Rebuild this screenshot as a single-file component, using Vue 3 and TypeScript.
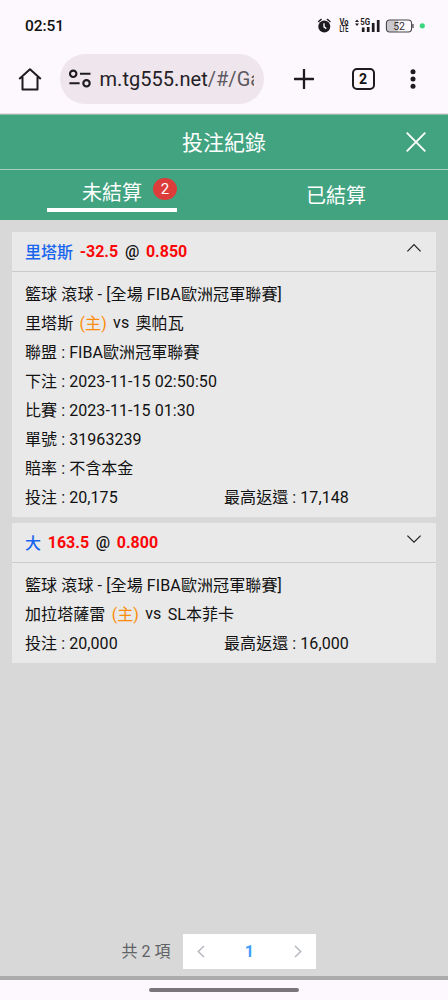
<script setup lang="ts">
interface Bet {
  pick: string
  line: string
  odds: string
  open: boolean
  home: string
  away: string
  details: { label: string; value: string }[]
  stake: string
  payout: string
}

const bets: Bet[] = [
  {
    pick: '里塔斯',
    line: '-32.5',
    odds: '0.850',
    open: true,
    home: '里塔斯',
    away: '奧帕瓦',
    details: [
      { label: '聯盟', value: 'FIBA歐洲冠軍聯賽' },
      { label: '下注', value: '2023-11-15 02:50:50' },
      { label: '比賽', value: '2023-11-15 01:30' },
      { label: '單號', value: '31963239' },
      { label: '賠率', value: '不含本金' },
    ],
    stake: '20,175',
    payout: '17,148',
  },
  {
    pick: '大',
    line: '163.5',
    odds: '0.800',
    open: false,
    home: '加拉塔薩雷',
    away: 'SL本菲卡',
    details: [],
    stake: '20,000',
    payout: '16,000',
  },
]
</script>

<template>
  <div class="screen">
    <div class="status">
      <span class="clock">02:51</span>
      <svg class="status-icons" width="118" height="20" viewBox="0 0 118 20">
        <g fill="none" stroke="#1d1b20" stroke-width="1.4" stroke-linecap="round">
          <path d="M2.6 5.5 5.2 3.4M14 5.5 11.4 3.4" />
        </g>
        <circle cx="8.3" cy="10.6" r="6" fill="#1d1b20" />
        <path d="M8 7.2v3.7l2.3 1.7" fill="none" stroke="#fdf8fd" stroke-width="1.4" />
        <text x="23.4" y="9.1" class="tiny" textLength="9" lengthAdjust="spacingAndGlyphs">Vo</text>
        <text x="23.4" y="16.3" class="tiny" textLength="9" lengthAdjust="spacingAndGlyphs">LTE</text>
        <path d="M39 6 41 3.6 43 6zM39 7.6 41 10 43 7.6z" fill="#1d1b20" />
        <text x="44.2" y="9.3" class="tiny" textLength="9.8" lengthAdjust="spacingAndGlyphs">5G</text>
        <path d="M47.2 16v-4.6M52.2 16v-5M57.2 16V7M62.2 16V4" stroke="#1d1b20" stroke-width="2.7" />
        <path d="M73.6 4.2H82v11.6h-8.4a3.2 3.2 0 0 1-3.2-3.2V7.4a3.2 3.2 0 0 1 3.2-3.2z" fill="#cbc8cc" />
        <rect x="70.4" y="4" width="25.2" height="12" rx="3.4" fill="none" stroke="#49464b" stroke-width="1.1" />
        <path d="M97 8v4" stroke="#49464b" stroke-width="1.3" />
        <text x="77.2" y="13.7" class="battery">52</text>
        <circle cx="106.3" cy="9.8" r="2.6" fill="#39d77d" />
      </svg>
    </div>

    <div class="browser">
      <svg class="home" width="24" height="24" viewBox="0 0 24 24" fill="none" stroke="#1d1b20" stroke-width="2">
        <path d="M1.2 12 12 2.2 22.8 12M4.5 10v12.5h15V10" stroke-linejoin="round" />
      </svg>
      <div class="address">
        <svg width="24" height="20" viewBox="0 0 24 20" fill="none" stroke="#1d1b20" stroke-width="2.1">
          <circle cx="5.2" cy="4.8" r="3.2" />
          <circle cx="18.5" cy="14.3" r="3.2" />
          <path d="M12 4.8h10.5M1.4 14.3h10.2" />
        </svg>
        <span class="url">m.tg555.net<span class="path">/#/Ga</span></span>
      </div>
      <svg class="plus" width="20" height="20" viewBox="0 0 20 20">
        <path d="M10 .7v18.6M.7 10h18.6" stroke="#1d1b20" stroke-width="2.3" stroke-linecap="round" />
      </svg>
      <span class="count">2</span>
      <svg class="dots" width="6" height="22" viewBox="0 0 6 22" fill="#1d1b20">
        <circle cx="3" cy="3.7" r="2.5" />
        <circle cx="3" cy="11" r="2.5" />
        <circle cx="3" cy="18.3" r="2.5" />
      </svg>
    </div>

    <header class="title">
      <h1>投注紀錄</h1>
      <svg class="close" width="22" height="22" viewBox="0 0 22 22">
        <path d="M1.7 1.7 20.3 20.3M20.3 1.7 1.7 20.3" stroke="#fff" stroke-width="1.9" />
      </svg>
    </header>

    <nav class="tabs">
      <div class="tab">
        <div class="tab-on"><span>未結算</span><span class="badge">2</span></div>
      </div>
      <div class="tab tab-off"><span>已結算</span></div>
    </nav>

    <main class="content">
      <section v-for="bet in bets" :key="bet.pick" class="card">
        <div class="card-head">
          <span class="pick">{{ bet.pick }}</span>
          <span class="red">{{ bet.line }}</span>
          <span class="at">@</span>
          <span class="red">{{ bet.odds }}</span>
          <svg class="chevron" width="16" height="10" viewBox="0 0 16 10" fill="none" stroke="#222" stroke-width="1.2">
            <path :d="bet.open ? 'M1.4 8.4 8 1.6l6.6 6.8' : 'M1.4 1.6 8 8.2l6.6-6.6'" />
          </svg>
        </div>
        <div class="card-body">
          <div class="row wide">籃球 滾球 - [全場 FIBA歐洲冠軍聯賽]</div>
          <div class="row teams">
            <span>{{ bet.home }}</span><span class="host">(主)</span><span class="versus">vs</span><span>{{ bet.away }}</span>
          </div>
          <div v-for="d in bet.details" :key="d.label" class="row">{{ d.label }} : {{ d.value }}</div>
          <div class="row money">
            <span>投注 : {{ bet.stake }}</span>
            <span>最高返還 : {{ bet.payout }}</span>
          </div>
        </div>
      </section>

      <footer class="pagination">
        <span class="total">共 2 項</span>
        <div class="pager">
          <svg width="8" height="13" viewBox="0 0 8 13"><path d="M7 1 1.3 6.5 7 12" /></svg>
          <span>1</span>
          <svg width="8" height="13" viewBox="0 0 8 13"><path d="M1 1l5.7 5.5L1 12" /></svg>
        </div>
      </footer>
    </main>

    <div class="gesture"><i></i></div>
  </div>
</template>

<style>
body {
  margin: 0;
}
</style>

<style scoped>
.screen {
  width: 448px;
  height: 1000px;
  display: flex;
  flex-direction: column;
  overflow: hidden;
  background: #fdf8fd;
  color: #111;
  font: 16px/29px Roboto, "Noto Sans CJK TC", sans-serif;
}
.status {
  height: 52px;
  box-sizing: border-box;
  padding: 0 14px 0 25px;
  display: flex;
  align-items: center;
  justify-content: space-between;
}
.clock {
  font: 500 15.5px/20px Roboto, sans-serif;
  letter-spacing: -0.05px;
}
.tiny {
  font: 700 8.4px Roboto, sans-serif;
  fill: #1d1b20;
}
.battery {
  font: 10.5px Roboto, sans-serif;
  fill: #333;
}
.browser {
  height: 62px;
  box-sizing: border-box;
  padding-left: 18px;
  display: flex;
  align-items: center;
  padding-bottom: 8px;
  border-bottom: 1px solid #e7dce2;
}
.address {
  width: 204px;
  height: 50px;
  margin-left: 17.5px;
  box-sizing: border-box;
  padding: 0 10px 0 8px;
  border-radius: 25px;
  background: #eee6ec;
  display: flex;
  align-items: center;
  gap: 8px;
}
.address svg {
  flex: none;
}
.url {
  width: 154px;
  padding-top: 2px;
  overflow: hidden;
  white-space: nowrap;
  font-size: 20px;
  letter-spacing: 0.04px;
  color: #242126;
}
.path {
  color: #5d595f;
}
.plus {
  margin-left: 30px;
}
.count {
  width: 23px;
  height: 22px;
  box-sizing: border-box;
  margin-left: 38px;
  border: 2.2px solid #1d1b20;
  border-radius: 5px;
  text-align: center;
  font: 700 14px/18px Roboto, sans-serif;
}
.dots {
  margin-left: 35.5px;
}
.title {
  position: relative;
  height: 56px;
  box-sizing: border-box;
  border-top: 1px solid #90bdaa;
  border-bottom: 1px solid #a8d0bf;
  background: #41a380;
  display: flex;
  align-items: center;
  justify-content: center;
  color: #fff;
}
h1 {
  margin: 2px 0 0;
  font-size: 21px;
  font-weight: 400;
}
.close {
  position: absolute;
  right: 21.5px;
  top: 15.5px;
}
.tabs {
  height: 50px;
  flex: none;
  display: flex;
  background: #41a380;
  color: #fff;
  font-size: 20px;
}
.tab {
  width: 224px;
  display: flex;
  justify-content: center;
}
.tab-on {
  width: 130px;
  height: 42px;
  box-sizing: border-box;
  padding: 0 0 0 35px;
  border-bottom: 4px solid #fff;
  display: flex;
  align-items: center;
  line-height: 42px;
}
.tab-on > span:first-child {
  padding-top: 7px;
}
.badge {
  width: 24px;
  height: 22px;
  margin-left: 11px;
  border-radius: 50%;
  background: #dc3c3a;
  text-align: center;
  font-size: 15px;
  line-height: 23px;
}
.tab-off {
  line-height: 53px;
}
.content {
  flex: 1;
  box-sizing: border-box;
  padding: 12px 12px 7px;
  background: #d8d8d8;
  border-bottom: 4px solid #ababab;
  display: flex;
  flex-direction: column;
  gap: 6px;
}
.card {
  background: #e9e9e9;
}
.card-head {
  height: 40px;
  box-sizing: border-box;
  padding: 1px 14px 0 13px;
  border-bottom: 1px solid #cbcbcb;
  display: flex;
  align-items: center;
  gap: 6.7px;
  font-weight: 500;
}
.pick {
  color: #1765ee;
}
.red {
  color: #fb0707;
  font-weight: 700;
}
.red,
.at {
  padding-bottom: 2px;
}
.chevron {
  margin: -8px 0 0 auto;
}
.card-body {
  padding: 8px 13px 5px;
}
.row {
  height: 29px;
  white-space: nowrap;
  letter-spacing: 0.07px;
}
.wide {
  letter-spacing: 0.11px;
}
.teams {
  display: flex;
  gap: 6.3px;
}
.versus {
  margin-top: -1px;
}
.host {
  color: #fb8c0a;
}
.money {
  display: grid;
  grid-template-columns: 199px 1fr;
}
.pagination {
  margin-top: auto;
  padding-left: 109.5px;
  display: flex;
  align-items: center;
  gap: 12.5px;
}
.total {
  color: #606266;
}
.pager {
  width: 133px;
  height: 35px;
  box-sizing: border-box;
  padding: 0 14px;
  background: #fff;
  display: flex;
  align-items: center;
  justify-content: space-between;
  color: #409eff;
  font-weight: 700;
}
.pager path {
  fill: none;
  stroke: #b4b8bf;
  stroke-width: 1.5;
}
.gesture {
  height: 20px;
  flex: none;
  display: flex;
  justify-content: center;
}
.gesture i {
  width: 150px;
  height: 4px;
  margin-top: 7.5px;
  border-radius: 2px;
  background: #79757b;
}
</style>
